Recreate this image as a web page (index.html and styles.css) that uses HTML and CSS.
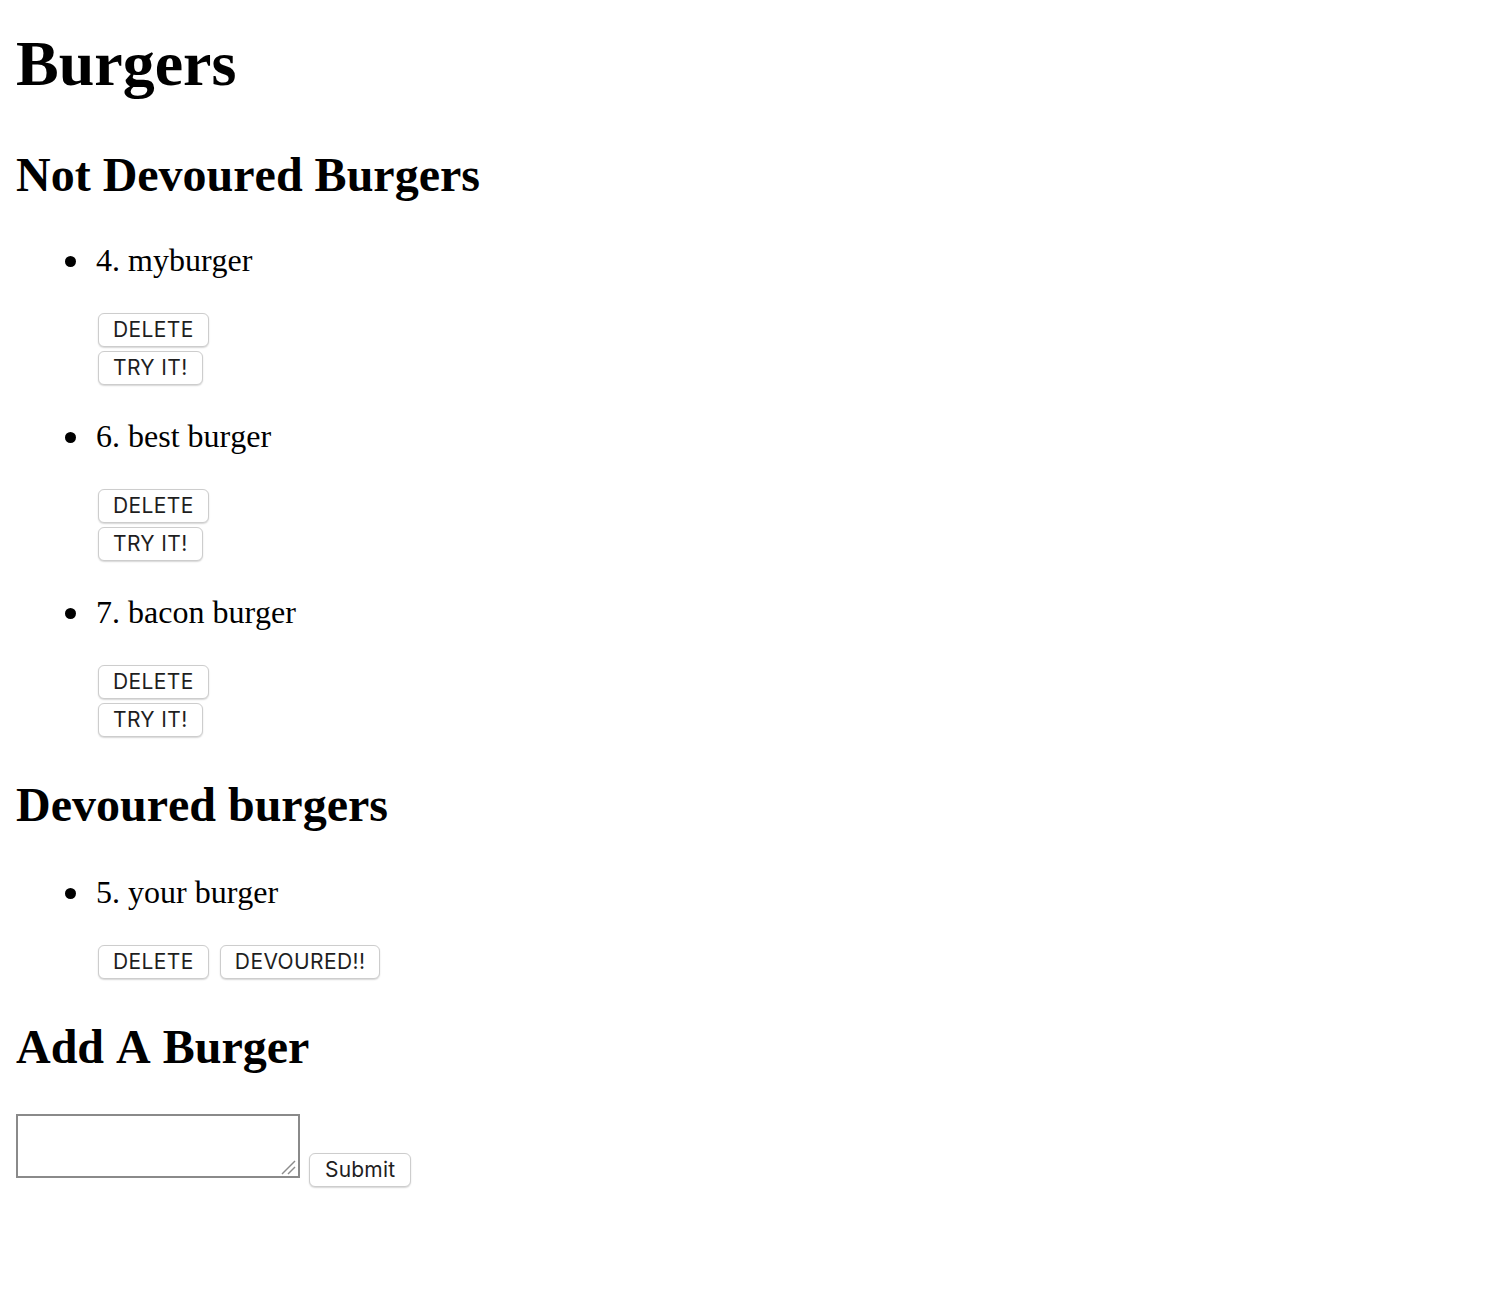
FILE: index.html
```html
<!DOCTYPE html>
<html lang="en">
<head>
<meta charset="utf-8">
<title>Burgers</title>
<link rel="stylesheet" href="styles.css">
</head>
<body>
<h1 class="title">Burgers</h1>

<h2 class="section-title section-title-first">Not Devoured Burgers</h2>
<ul class="burger-list burger-list-first">
  <li class="burger">
    <div class="burger-name">4. myburger</div>
    <div class="actions actions-stacked">
      <button class="btn">DELETE</button>
      <button class="btn">TRY IT!</button>
    </div>
  </li>
  <li class="burger">
    <div class="burger-name">6. best burger</div>
    <div class="actions actions-stacked">
      <button class="btn">DELETE</button>
      <button class="btn">TRY IT!</button>
    </div>
  </li>
  <li class="burger">
    <div class="burger-name">7. bacon burger</div>
    <div class="actions actions-stacked">
      <button class="btn">DELETE</button>
      <button class="btn">TRY IT!</button>
    </div>
  </li>
</ul>

<h2 class="section-title">Devoured burgers</h2>
<ul class="burger-list">
  <li class="burger">
    <div class="burger-name">5. your burger</div>
    <div class="actions actions-inline">
      <button class="btn">DELETE</button>
      <button class="btn">DEVOURED!!</button>
    </div>
  </li>
</ul>

<h2 class="section-title">Add A Burger</h2>
<form class="add-form">
  <span class="input-wrap">
    <textarea class="burger-input"></textarea>
    <svg class="resize-grip" width="16" height="16" viewBox="0 0 16 16" aria-hidden="true">
      <line x1="2" y1="15" x2="15" y2="2" stroke="#8c8c8c" stroke-width="1.5"/>
      <line x1="8" y1="15" x2="15" y2="8" stroke="#8c8c8c" stroke-width="1.5"/>
    </svg>
  </span>
  <button class="btn btn-submit" type="button">Submit</button>
</form>
</body>
</html>
```

FILE: styles.css
```css
html, body {
  background: #ffffff;
}

body {
  margin: 0;
  padding: 0 16px 60px;
  font-family: "Liberation Serif", "Times New Roman", serif;
  font-kerning: none;
  color: #000000;
}

.title {
  margin: 27px 0 0;
  font-size: 64px;
  line-height: 74px;
  font-weight: bold;
}

.section-title {
  margin: 40px 0 0;
  font-size: 48px;
  line-height: 55px;
  font-weight: bold;
}

.section-title-first {
  margin-top: 46px;
}

.burger-list {
  margin: 42px 0 0;
  padding: 0 0 0 80px;
  list-style: none;
  font-size: 32px;
}

.burger-list-first {
  margin-top: 40px;
}

.burger {
  position: relative;
}

.burger::before {
  content: "";
  position: absolute;
  left: -31px;
  top: 14px;
  width: 11px;
  height: 11px;
  border-radius: 50%;
  background: #000000;
}

.burger + .burger {
  margin-top: 33px;
}

.burger-name {
  line-height: 37px;
}

.actions {
  display: flex;
  margin-top: 34px;
  align-items: flex-start;
}

.actions-stacked {
  flex-direction: column;
  gap: 4px;
}

.actions-inline {
  flex-direction: row;
  gap: 9px;
}

.btn {
  box-sizing: border-box;
  height: 34px;
  margin: 0 0 0 2px;
  padding: 0 14px;
  font-family: Inter, "Noto Sans", sans-serif;
  font-size: 21px;
  line-height: 32px;
  letter-spacing: 0.4px;
  color: #1e1e1e;
  background: #ffffff;
  border: 1px solid #cdcdcd;
  border-radius: 6px;
  box-shadow: 0 1px 1.5px rgba(0, 0, 0, 0.16);
}

.add-form {
  display: flex;
  align-items: flex-start;
  margin: 40px 0 0;
}

.input-wrap {
  position: relative;
  display: block;
  width: 284px;
  height: 64px;
}

.burger-input {
  display: block;
  box-sizing: border-box;
  width: 284px;
  height: 64px;
  margin: 0;
  padding: 4px;
  border: 2px solid #8a8a8a;
  background: #ffffff;
  font-size: 22px;
  resize: none;
}

.resize-grip {
  position: absolute;
  right: 4px;
  bottom: 3px;
}

.btn-submit {
  margin: 39px 0 0 9px;
  padding: 0 15px;
  letter-spacing: 0.2px;
}
```
